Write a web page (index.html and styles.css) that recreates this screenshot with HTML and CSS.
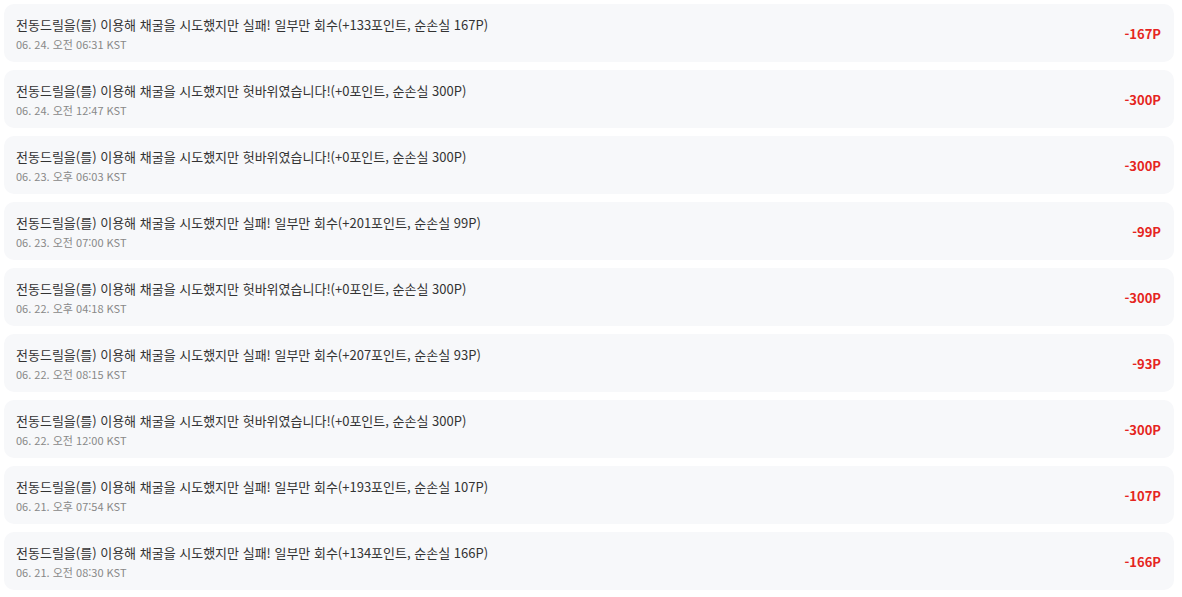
FILE: index.html
```html
<!DOCTYPE html>
<html lang="ko">

<head>
    <meta charset="UTF-8">
    <meta name="viewport" content="width=device-width, initial-scale=1.0">
    <title>포인트 내역</title>
    <link rel="stylesheet" href="styles.css">
</head>

<body>
    <ul class="history-list">
        <li class="history-item">
            <div class="history-info">
                <p class="history-title">전동드릴을(를) 이용해 채굴을 시도했지만 실패! 일부만 회수(+133포인트, 순손실 167P)</p>
                <p class="history-date">06. 24. 오전 06:31 KST</p>
            </div>
            <span class="history-amount">-167P</span>
        </li>
        <li class="history-item">
            <div class="history-info">
                <p class="history-title">전동드릴을(를) 이용해 채굴을 시도했지만 헛바위였습니다!(+0포인트, 순손실 300P)</p>
                <p class="history-date">06. 24. 오전 12:47 KST</p>
            </div>
            <span class="history-amount">-300P</span>
        </li>
        <li class="history-item">
            <div class="history-info">
                <p class="history-title">전동드릴을(를) 이용해 채굴을 시도했지만 헛바위였습니다!(+0포인트, 순손실 300P)</p>
                <p class="history-date">06. 23. 오후 06:03 KST</p>
            </div>
            <span class="history-amount">-300P</span>
        </li>
        <li class="history-item">
            <div class="history-info">
                <p class="history-title">전동드릴을(를) 이용해 채굴을 시도했지만 실패! 일부만 회수(+201포인트, 순손실 99P)</p>
                <p class="history-date">06. 23. 오전 07:00 KST</p>
            </div>
            <span class="history-amount">-99P</span>
        </li>
        <li class="history-item">
            <div class="history-info">
                <p class="history-title">전동드릴을(를) 이용해 채굴을 시도했지만 헛바위였습니다!(+0포인트, 순손실 300P)</p>
                <p class="history-date">06. 22. 오후 04:18 KST</p>
            </div>
            <span class="history-amount">-300P</span>
        </li>
        <li class="history-item">
            <div class="history-info">
                <p class="history-title">전동드릴을(를) 이용해 채굴을 시도했지만 실패! 일부만 회수(+207포인트, 순손실 93P)</p>
                <p class="history-date">06. 22. 오전 08:15 KST</p>
            </div>
            <span class="history-amount">-93P</span>
        </li>
        <li class="history-item">
            <div class="history-info">
                <p class="history-title">전동드릴을(를) 이용해 채굴을 시도했지만 헛바위였습니다!(+0포인트, 순손실 300P)</p>
                <p class="history-date">06. 22. 오전 12:00 KST</p>
            </div>
            <span class="history-amount">-300P</span>
        </li>
        <li class="history-item">
            <div class="history-info">
                <p class="history-title">전동드릴을(를) 이용해 채굴을 시도했지만 실패! 일부만 회수(+193포인트, 순손실 107P)</p>
                <p class="history-date">06. 21. 오후 07:54 KST</p>
            </div>
            <span class="history-amount">-107P</span>
        </li>
        <li class="history-item">
            <div class="history-info">
                <p class="history-title">전동드릴을(를) 이용해 채굴을 시도했지만 실패! 일부만 회수(+134포인트, 순손실 166P)</p>
                <p class="history-date">06. 21. 오전 08:30 KST</p>
            </div>
            <span class="history-amount">-166P</span>
        </li>
    </ul>
</body>

</html>
```

FILE: styles.css
```css
html {
    margin: 0;
    padding: 0;
    background: #fff;
    font-family: 'Noto Sans CJK KR', 'Noto Sans', sans-serif;
}

body {
    margin: 0;
    padding: 4px 8px 4px 4px;
}

.history-list {
    display: flex;
    flex-direction: column;
    gap: 8px;
    margin: 0;
    padding: 0;
    list-style: none;
}

.history-item {
    display: flex;
    align-items: center;
    justify-content: space-between;
    height: 58px;
    box-sizing: border-box;
    padding: 0 13px 0 12px;
    background: #f7f8fa;
    border-radius: 10px;
}

.history-title {
    margin: 0;
    font-size: 13px;
    color: #333;
    line-height: 20px;
}

.history-date {
    margin: 1px 0 0;
    font-size: 11px;
    color: #888;
    line-height: 16px;
}

.history-amount {
    font-size: 13px;
    font-weight: 700;
    color: #e52521;
}
```
